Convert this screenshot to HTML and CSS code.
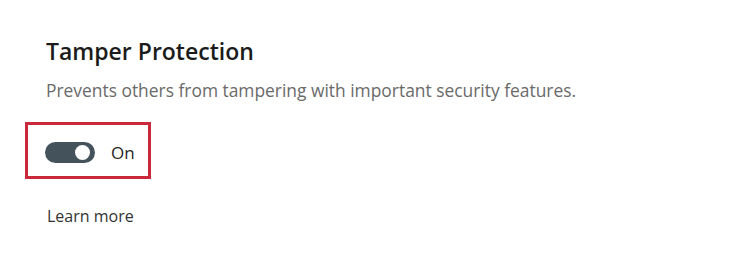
FILE: index.html
```html
<!DOCTYPE html>
<html lang="en">
<head>
<meta charset="utf-8">
<title>Tamper Protection</title>
<link rel="stylesheet" href="styles.css">
</head>
<body>
<main class="panel">
  <h1 class="title">Tamper Protection</h1>
  <p class="desc">Prevents others from tampering with important security features.</p>
  <div class="highlight">
    <div class="toggle-row">
      <span class="toggle"><span class="knob"></span></span>
      <span class="state">On</span>
    </div>
  </div>
  <a class="learn" href="#">Learn more</a>
</main>
</body>
</html>
```
FILE: styles.css
```css
html, body {
  margin: 0;
  padding: 0;
  background: #ffffff;
}
body {
  width: 750px;
  height: 274px;
  overflow: hidden;
  font-family: "Open Sans", "Noto Sans", sans-serif;
}
.panel {
  display: flex;
  flex-direction: column;
  align-items: flex-start;
  padding: 36px 0 0 46px;
}
.title {
  margin: 0;
  font-size: 23px;
  line-height: 30px;
  font-weight: 600;
  color: #1b1b1b;
}
.desc {
  margin: 13px 0 0 0;
  font-size: 17.4px;
  line-height: 22px;
  color: #6a6a6a;
}
.highlight {
  margin: 21px 0 0 -21px;
  width: 103px;
  height: 51px;
  border: 3.5px solid #c9293b;
  display: flex;
  align-items: center;
  padding-left: 17px;
  box-sizing: content-box;
}
.toggle-row {
  display: flex;
  align-items: center;
  gap: 16px;
  margin-top: 4px;
}
.toggle {
  width: 50px;
  height: 21px;
  border-radius: 11px;
  background: #44525c;
  display: flex;
  align-items: center;
  justify-content: flex-end;
  padding-right: 5px;
  box-sizing: border-box;
}
.knob {
  width: 15px;
  height: 15px;
  border-radius: 50%;
  background: #ffffff;
}
.state {
  font-size: 17px;
  line-height: 22px;
  color: #1f1f1f;
}
.learn {
  margin: 26px 0 0 1px;
  font-size: 16px;
  line-height: 22px;
  color: #333333;
  text-decoration: none;
}
```
